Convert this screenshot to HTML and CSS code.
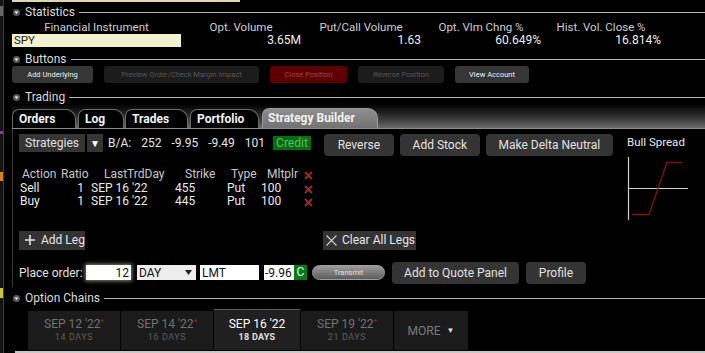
FILE: index.html
```html
<!DOCTYPE html>
<html lang="en">
<head>
<meta charset="UTF-8">
<title>Strategy Builder</title>
<link rel="stylesheet" href="styles.css">
</head>
<body>
<div class="app">
    <div class="gutter">
        <span class="mark mark-top"></span>
        <span class="mark mark-purple"></span>
        <span class="mark mark-orange"></span>
        <span class="mark mark-yellow"></span>
    </div>

    <div class="main">
        <div class="top-strip"></div>

        <div class="section-head">
            <svg class="toggle" width="7" height="7" viewBox="0 0 7 7"><circle cx="3.5" cy="3.5" r="3.5" fill="#5a5a5a"/><polygon points="1.6,2.4 5.4,2.4 3.5,5" fill="#fff"/></svg>
            <span>Statistics</span>
            <i class="rule"></i>
        </div>
        <div class="stat-grid">
            <div class="stat-label">Financial Instrument</div>
            <div class="stat-label">Opt. Volume</div>
            <div class="stat-label">Put/Call Volume</div>
            <div class="stat-label">Opt. Vlm Chng %</div>
            <div class="stat-label">Hist. Vol. Close %</div>
            <div class="symbol">SPY</div>
            <div class="stat-value">3.65M</div>
            <div class="stat-value">1.63</div>
            <div class="stat-value">60.649%</div>
            <div class="stat-value">16.814%</div>
        </div>

        <div class="section-head head-buttons">
            <svg class="toggle" width="7" height="7" viewBox="0 0 7 7"><circle cx="3.5" cy="3.5" r="3.5" fill="#5a5a5a"/><polygon points="1.6,2.4 5.4,2.4 3.5,5" fill="#fff"/></svg>
            <span>Buttons</span>
            <i class="rule"></i>
        </div>
        <div class="tool-row">
            <button class="tool w-underlying">Add Underlying</button>
            <button class="tool off w-preview">Preview Order/Check Margin Impact</button>
            <button class="tool danger w-close">Close Position</button>
            <button class="tool off w-reverse">Reverse Position</button>
            <button class="tool w-account">View Account</button>
        </div>

        <div class="section-head head-trading">
            <svg class="toggle" width="7" height="7" viewBox="0 0 7 7"><circle cx="3.5" cy="3.5" r="3.5" fill="#5a5a5a"/><polygon points="1.6,2.4 5.4,2.4 3.5,5" fill="#fff"/></svg>
            <span>Trading</span>
            <i class="rule"></i>
        </div>

        <div class="tab-bar">
            <div class="tab w-orders">Orders</div>
            <div class="tab w-log">Log</div>
            <div class="tab w-trades">Trades</div>
            <div class="tab w-portfolio">Portfolio</div>
            <div class="tab active w-builder">Strategy Builder</div>
        </div>

        <div class="panel">
            <div class="builder">
                <div class="quote-row">
                    <button class="dark-btn strategies">Strategies</button>
                    <button class="dark-btn caret">&#9660;</button>
                    <div class="quote">
                        <span>B/A:</span>
                        <span>252</span>
                        <span>-9.95</span>
                        <span>-9.49</span>
                        <span>101</span>
                        <span class="credit">Credit</span>
                    </div>
                    <button class="round-btn w-rev">Reverse</button>
                    <button class="round-btn w-stock">Add Stock</button>
                    <button class="round-btn w-delta">Make Delta Neutral</button>
                </div>

                <div class="legs">
                    <div class="legs-row legs-head">
                        <span class="c-action">Action</span>
                        <span class="c-ratio">Ratio</span>
                        <span class="c-day">LastTrdDay</span>
                        <span class="c-strike">Strike</span>
                        <span class="c-type">Type</span>
                        <span class="c-mult">Mltplr</span>
                        <span class="c-del"><svg width="9" height="9" viewBox="0 0 9 9"><path d="M1 1L8 8M8 1L1 8" stroke="#9c2a2a" stroke-width="2"/></svg></span>
                    </div>
                    <div class="legs-row">
                        <span class="c-action">Sell</span>
                        <span class="c-ratio">1</span>
                        <span class="c-day">SEP 16 '22</span>
                        <span class="c-strike">455</span>
                        <span class="c-type">Put</span>
                        <span class="c-mult">100</span>
                        <span class="c-del"><svg width="9" height="9" viewBox="0 0 9 9"><path d="M1 1L8 8M8 1L1 8" stroke="#9c2a2a" stroke-width="2"/></svg></span>
                    </div>
                    <div class="legs-row">
                        <span class="c-action">Buy</span>
                        <span class="c-ratio">1</span>
                        <span class="c-day">SEP 16 '22</span>
                        <span class="c-strike">445</span>
                        <span class="c-type">Put</span>
                        <span class="c-mult">100</span>
                        <span class="c-del"><svg width="9" height="9" viewBox="0 0 9 9"><path d="M1 1L8 8M8 1L1 8" stroke="#9c2a2a" stroke-width="2"/></svg></span>
                    </div>
                </div>

                <div class="leg-actions">
                    <button class="flat-btn w-addleg">
                        <svg width="10" height="10" viewBox="0 0 10 10"><path d="M5 0V10M0 5H10" stroke="#e6e6e6" stroke-width="1.6"/></svg>
                        Add Leg
                    </button>
                    <button class="flat-btn w-clear">
                        <svg width="11" height="11" viewBox="0 0 11 11"><path d="M0.5 0.5L10.5 10.5M10.5 0.5L0.5 10.5" stroke="#cfcfcf" stroke-width="1.1"/></svg>
                        Clear All Legs
                    </button>
                </div>

                <div class="order-row">
                    <span class="order-label">Place order:</span>
                    <span class="field qty">12</span>
                    <span class="field tif">DAY<svg width="7" height="5" viewBox="0 0 7 5"><polygon points="0,0 7,0 3.5,5" fill="#222"/></svg></span>
                    <span class="field type">LMT</span>
                    <span class="field price">-9.96</span><span class="price-flag">C</span>
                    <button class="transmit">Transmit</button>
                    <button class="round-btn w-quote">Add to Quote Panel</button>
                    <button class="round-btn w-profile">Profile</button>
                </div>
            </div>

            <div class="payoff">
                <div class="payoff-title">Bull Spread</div>
                <svg width="64" height="64" viewBox="0 0 64 64">
                    <path d="M1.5 0V63" stroke="#d0d0d0" stroke-width="1.2"/>
                    <path d="M1.5 31.5H61" stroke="#d0d0d0" stroke-width="1.2"/>
                    <path d="M5 57.5H22L40 5.5H55" stroke="#8a0e0e" stroke-width="1.3" fill="none"/>
                </svg>
            </div>
        </div>

        <div class="section-head head-chains">
            <svg class="toggle" width="7" height="7" viewBox="0 0 7 7"><circle cx="3.5" cy="3.5" r="3.5" fill="#5a5a5a"/><polygon points="1.6,2.4 5.4,2.4 3.5,5" fill="#fff"/></svg>
            <span>Option Chains</span>
            <i class="rule"></i>
        </div>

        <div class="expiries">
            <div class="expiry w-e1"><b>SEP 12 '22<sup>*</sup></b><small>14 DAYS</small></div>
            <div class="expiry w-e2"><b>SEP 14 '22<sup>*</sup></b><small>16 DAYS</small></div>
            <div class="expiry current w-e3"><b>SEP 16 '22</b><small>18 DAYS</small></div>
            <div class="expiry w-e4"><b>SEP 19 '22<sup>*</sup></b><small>21 DAYS</small></div>
            <div class="expiry more w-e5">MORE <span class="more-caret">&#9660;</span></div>
        </div>
        <div class="bottom-rule"></div>
    </div>
</div>
</body>
</html>
```

FILE: styles.css
```css
* {
    box-sizing: border-box;
}

body {
    margin: 0;
    padding: 0;
    background-color: #000;
    color: #ddd;
    font-family: Roboto, "Liberation Sans", sans-serif;
    font-size: 12px;
    overflow: hidden;
}

button {
    font-family: inherit;
    border: none;
    padding: 0;
    margin: 0;
    cursor: pointer;
}

.app {
    display: flex;
    width: 705px;
    height: 353px;
}

/* left edge of the window */
.gutter {
    width: 4px;
    flex: none;
    display: flex;
    flex-direction: column;
    background-color: #141414;
    border-right: 1px solid #3c3c3c;
}

.mark {
    display: block;
    width: 3px;
}

.mark-top {
    margin-top: 6px;
    height: 10px;
    background-color: #666;
}

.mark-purple {
    margin-top: 115px;
    height: 3px;
    background-color: #8a3c9c;
}

.mark-orange {
    margin-top: 38px;
    height: 9px;
    background-color: #d8801c;
}

.mark-yellow {
    margin-top: 107px;
    height: 10px;
    background-color: #c9c43a;
}

.main {
    flex: 1;
    padding-left: 8px;
    display: flex;
    flex-direction: column;
}

.top-strip {
    width: 228px;
    height: 2px;
    background-color: #ddd8b0;
}

/* collapsible section headers */
.section-head {
    display: flex;
    align-items: center;
    height: 18px;
    margin-top: 1px;
    color: #dcdcdc;
    font-size: 12px;
}

.section-head .toggle {
    margin-left: 1px;
    margin-right: 5px;
}

.section-head .rule {
    flex: 1;
    height: 1px;
    margin-left: 4px;
    background-color: #b5b5b5;
}

.head-buttons {
    height: 14px;
    margin-top: 5px;
}

.head-trading {
    height: 14px;
    margin-top: 7px;
}

.head-chains {
    height: 14px;
    margin-top: 4px;
}

/* statistics */
.stat-grid {
    display: grid;
    grid-template-columns: 169px repeat(4, 120px);
    grid-template-rows: 12px 13px;
    row-gap: 1px;
}

.stat-label {
    text-align: center;
    line-height: 13px;
    color: #cfcfcf;
    font-size: 11.5px;
}

.stat-value {
    text-align: right;
    line-height: 13px;
    color: #eee;
    font-size: 12px;
}

.symbol {
    background-color: #f2f0cf;
    color: #222;
    line-height: 13px;
    padding-left: 2px;
    font-size: 11.5px;
}

/* small buttons row */
.tool-row {
    display: flex;
    gap: 11px;
    height: 17px;
}

.tool {
    height: 17px;
    border-radius: 3px;
    background-color: #363636;
    color: #f0f0f0;
    font-size: 7.5px;
}

.tool.off {
    background-color: #1c1c1c;
    color: #565656;
}

.tool.danger {
    background-color: #5e0000;
    color: #a84444;
}

.w-underlying { width: 81px; }
.w-preview { width: 155px; }
.w-close { width: 77px; }
.w-reverse { width: 86px; }
.w-account { width: 74px; }

/* trading tabs */
.tab-bar {
    display: flex;
    align-items: flex-end;
    gap: 2px;
    height: 25px;
    background: linear-gradient(to bottom, #000 0%, #1e1e1e 35%, #4a4a4a 75%, #6a6a6a 100%);
    border-bottom: 1px solid #8a8a8a;
}

.tab {
    height: 19px;
    padding-left: 6px;
    background-color: #000;
    border: 1px solid #6a6a6a;
    border-bottom: none;
    border-radius: 7px 10px 0 0;
    color: #f2f2f2;
    font-weight: bold;
    font-size: 12px;
    line-height: 18px;
}

.tab.active {
    height: 20px;
    background: linear-gradient(to bottom, #8e8e8e, #727272);
    border-color: #999;
    padding-left: 5px;
}

.w-orders { width: 64px; }
.w-log { width: 46px; }
.w-trades { width: 63px; margin-left: -1px; }
.w-portfolio { width: 69px; }
.w-builder { width: 116px; margin-left: 1px; }

/* strategy builder panel */
.panel {
    display: flex;
    height: 158px;
    border-left: 1px solid #3a3a3a;
}

.builder {
    width: 607px;
    padding-left: 6px;
    padding-top: 5px;
}

.quote-row {
    display: flex;
    align-items: flex-start;
    height: 22px;
}

.dark-btn {
    height: 18px;
    background-color: #353535;
    color: #e0e0e0;
    font-size: 12px;
}

.strategies {
    width: 66px;
}

.caret {
    width: 16px;
    margin-left: 2px;
    font-size: 10px;
    color: #fff;
}

.quote {
    display: flex;
    align-items: center;
    gap: 10px;
    height: 18px;
    margin-left: 5px;
    color: #e6e6e6;
}

.credit {
    background-color: #0b6b12;
    color: #52c05a;
    padding: 0 3px;
    line-height: 14px;
    margin-left: -2px;
}

.round-btn {
    height: 22px;
    border-radius: 4px;
    background-color: #343434;
    color: #e2e2e2;
    font-size: 12px;
}

.w-rev { width: 70px; margin-left: 13px; }
.w-stock { width: 80px; margin-left: 6px; }
.w-delta { width: 127px; margin-left: 6px; }

/* legs table */
.legs {
    margin-top: 12px;
}

.legs-row {
    display: flex;
    height: 13.5px;
    line-height: 13.5px;
    color: #ececec;
}

.legs-head {
    color: #c8c8c8;
}

.legs-row span {
    display: block;
}

.c-action { width: 40px; padding-left: 1px; }
.c-ratio { width: 28px; text-align: right; padding-right: 3px; }
.c-day { width: 79px; padding-left: 4px; }
.c-strike { width: 54px; padding-left: 9px; }
.c-type { width: 37px; padding-left: 7px; }
.c-mult { width: 42px; padding-left: 4px; }
.c-del { width: 20px; padding-left: 5px; padding-top: 2px; }

.legs-head .c-action { padding-left: 3px; }
.legs-head .c-ratio { text-align: left; padding-left: 2px; padding-right: 0; }
.legs-head .c-day { padding-left: 17px; }
.legs-head .c-strike { padding-left: 19px; }
.legs-head .c-type { padding-left: 11px; }
.legs-head .c-mult { padding-left: 10px; }

/* add / clear legs */
.leg-actions {
    display: flex;
    margin-top: 22px;
    height: 19px;
}

.flat-btn {
    display: flex;
    align-items: center;
    gap: 6px;
    height: 19px;
    background-color: #333;
    color: #e6e6e6;
    font-size: 12px;
    padding-left: 6px;
}

.w-addleg { width: 66px; }
.w-clear { width: 93px; margin-left: 238px; padding-left: 3px; gap: 5px; }

/* place order row */
.order-row {
    display: flex;
    align-items: center;
    height: 22px;
    margin-top: 12px;
}

.order-label {
    width: 67px;
    color: #e0e0e0;
}

.field {
    display: flex;
    align-items: center;
    height: 15px;
    background-color: #fff;
    color: #111;
    font-size: 12px;
    padding: 0 2px;
}

.qty {
    width: 45px;
    justify-content: flex-end;
    box-shadow: 0 0 4px 1px rgba(255, 250, 210, 0.55);
}

.tif {
    width: 59px;
    margin-left: 6px;
    background-color: #ededed;
    justify-content: space-between;
    padding-right: 4px;
}

.type {
    width: 59px;
    margin-left: 4px;
}

.price {
    width: 30px;
    margin-left: 5px;
    padding: 0 1px;
}

.price-flag {
    width: 13px;
    height: 15px;
    background-color: #0b7a16;
    color: #cfe;
    text-align: center;
    line-height: 15px;
}

.transmit {
    width: 73px;
    height: 15px;
    margin-left: 5px;
    border-radius: 8px;
    border: 1px solid #a0a0a0;
    background: linear-gradient(to bottom, #9c9c9c, #5c5c5c);
    color: #e0e0e0;
    font-size: 7.5px;
}

.w-quote { width: 127px; margin-left: 7px; }
.w-profile { width: 60px; margin-left: 7px; }

/* payoff diagram */
.payoff {
    padding-top: 6px;
    padding-left: 7px;
}

.payoff-title {
    color: #eaeaea;
    font-size: 11.5px;
    height: 20px;
}

.payoff svg {
    display: block;
    margin-top: 2px;
}

/* option chain expiries */
.expiries {
    display: flex;
    align-items: flex-end;
    height: 45px;
    margin-left: 16px;
}

.expiry {
    display: flex;
    flex-direction: column;
    align-items: center;
    justify-content: center;
    height: 39px;
    margin-right: 1px;
    background-color: #1b1b1b;
    color: #727272;
}

.expiry b {
    font-weight: normal;
    font-size: 12px;
    line-height: 13px;
}

.expiry sup {
    color: #a02020;
    font-size: 8px;
    vertical-align: top;
    line-height: 8px;
}

.expiry small {
    font-size: 9px;
    line-height: 12px;
    color: #5c5c5c;
    letter-spacing: 0.6px;
}

.expiry.current {
    height: 41px;
    background-color: #202020;
    border-top: 1px solid #5a5a5a;
    color: #fff;
}

.expiry.current small {
    color: #e0e0e0;
    font-weight: bold;
    letter-spacing: 0.3px;
}

.expiry.more {
    flex-direction: row;
    gap: 6px;
    font-size: 12px;
    color: #7a7a7a;
}

.more-caret {
    font-size: 8px;
    color: #ddd;
}

.w-e1 { width: 92px; }
.w-e2 { width: 92px; }
.w-e3 { width: 86px; }
.w-e4 { width: 92px; }
.w-e5 { width: 74px; }

.bottom-rule {
    height: 2px;
    margin-left: 3px;
    margin-top: 1px;
    background-color: #c8c8c8;
}
```
